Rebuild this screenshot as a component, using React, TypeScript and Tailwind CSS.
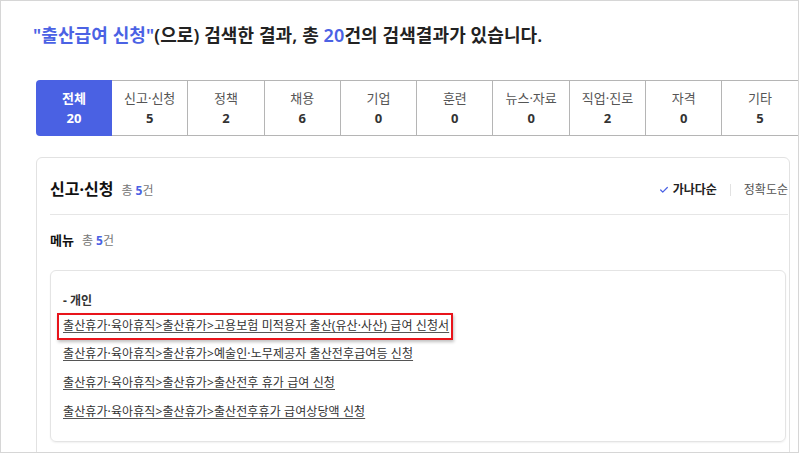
import { Check } from "lucide-react";

const TABS = [
  { label: "전체", count: 20 },
  { label: "신고·신청", count: 5 },
  { label: "정책", count: 2 },
  { label: "채용", count: 6 },
  { label: "기업", count: 0 },
  { label: "훈련", count: 0 },
  { label: "뉴스·자료", count: 0 },
  { label: "직업·진로", count: 2 },
  { label: "자격", count: 0 },
  { label: "기타", count: 5 },
];

const LINKS = [
  "출산휴가·육아휴직>출산휴가>고용보험 미적용자 출산(유산·사산) 급여 신청서",
  "출산휴가·육아휴직>출산휴가>예술인·노무제공자 출산전후급여등 신청",
  "출산휴가·육아휴직>출산휴가>출산전후 휴가 급여 신청",
  "출산휴가·육아휴직>출산휴가>출산전후휴가 급여상당액 신청",
];

export default function App() {
  return (
    <div
      className="w-[799px] h-[453px] overflow-hidden border border-[#d6d6d6] bg-white pl-[35px] text-[#222]"
      style={{ fontFamily: '"Noto Sans", "Noto Sans CJK KR", sans-serif' }}
    >
      {/* 검색 결과 제목 */}
      <h1 className="pt-[22px] -ml-[3px] text-[18px] leading-[24px] font-semibold tracking-[0.1px] whitespace-nowrap">
        <span className="text-[#4b62e4]">"출산급여 신청"</span>(으로) 검색한 결과, 총{" "}
        <span className="text-[#4b62e4]">20</span>건의 검색결과가 있습니다.
      </h1>

      {/* 탭 */}
      <div className="mt-[33px] flex w-[800px] h-[56px]">
        {TABS.map((t, i) =>
          i === 0 ? (
            <div
              key={t.label}
              className="w-[76px] shrink-0 rounded-l-[4px] bg-[#4a61e3] flex flex-col items-center justify-center text-white font-bold text-[13px] leading-[20px]"
            >
              <span>{t.label}</span>
              <span>{t.count}</span>
            </div>
          ) : (
            <div
              key={t.label}
              className="w-[76.3px] shrink-0 border-y border-r border-[#b5b5b5] flex flex-col items-center justify-center text-[13px] leading-[20px]"
            >
              <span className="text-[#555]">{t.label}</span>
              <span className="font-bold text-[#333]">{t.count}</span>
            </div>
          )
        )}
      </div>

      {/* 카드 */}
      <div className="mt-[21px] w-[754px] h-[320px] rounded-[6px] border border-[#e2e2e2] pl-[13px] pr-[1px]">
        <div className="flex items-center justify-between pt-[20px] pb-[12px] border-b border-[#e6e6e6] leading-[22px]">
          <div className="flex items-baseline gap-[8px]">
            <span className="text-[16px] font-bold text-[#111]">신고·신청</span>
            <span className="text-[12px] text-[#777]">
              총 <b className="text-[#4b62e4] font-bold">5</b>건
            </span>
          </div>
          <div className="flex items-center text-[12px]">
            <Check size={10} strokeWidth={3} className="text-[#4b62e4] mr-[4px]" />
            <span className="font-bold text-[#222]">가나다순</span>
            <span className="mx-[13px] h-[12px] w-px bg-[#e2e2e2]" />
            <span className="text-[#555]">정확도순</span>
          </div>
        </div>

        <div className="pt-[16px] flex items-baseline gap-[8px] leading-[18px]">
          <span className="text-[13px] font-bold text-[#111]">메뉴</span>
          <span className="text-[12px] text-[#777]">
            총 <b className="text-[#4b62e4] font-bold">5</b>건
          </span>
        </div>

        <div className="mt-[20px] w-[736px] rounded-[6px] border border-[#e4e4e4] shadow-[0_1px_2px_rgba(0,0,0,0.06)] pl-[12px] pt-[21px] pb-[15px]">
          <div className="text-[12px] font-bold leading-[18px] text-[#333]">- 개인</div>
          <ul className="text-[12px] leading-[28.7px] text-[#333] tracking-[0.1px] mt-[1.5px]">
            {LINKS.map((l, i) => (
              <li key={l}>
                <span className="relative inline-block">
                  <a className="underline underline-offset-[2px] decoration-[#555]">{l}</a>
                  {i === 0 && (
                    <span className="absolute -left-[6px] -right-[4px] top-[1px] bottom-[0px] border-2 border-[#e8141b] shadow-[1px_2px_3px_rgba(0,0,0,0.25)]" />
                  )}
                </span>
              </li>
            ))}
          </ul>
        </div>
      </div>
    </div>
  );
}
